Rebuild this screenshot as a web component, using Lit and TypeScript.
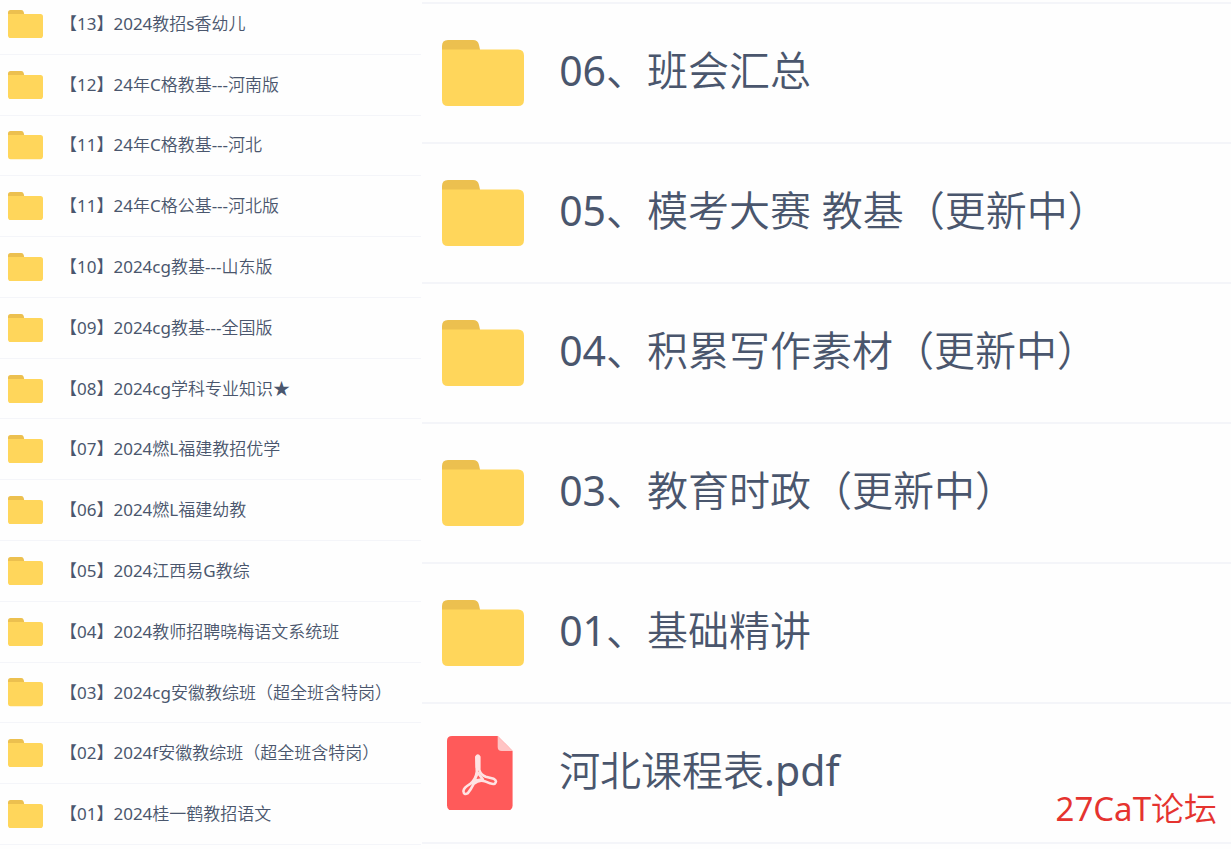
import { LitElement, css, html } from "lit";
import { customElement, property } from "lit/decorators.js";

interface Entry {
  name: string;
  kind: "folder" | "pdf";
}

const folder = (name: string): Entry => ({ name, kind: "folder" });

const COURSES: Entry[] = [
  "【13】2024教招s香幼儿",
  "【12】24年C格教基---河南版",
  "【11】24年C格教基---河北",
  "【11】24年C格公基---河北版",
  "【10】2024cg教基---山东版",
  "【09】2024cg教基---全国版",
  "【08】2024cg学科专业知识★",
  "【07】2024燃L福建教招优学",
  "【06】2024燃L福建幼教",
  "【05】2024江西易G教综",
  "【04】2024教师招聘晓梅语文系统班",
  "【03】2024cg安徽教综班（超全班含特岗）",
  "【02】2024f安徽教综班（超全班含特岗）",
  "【01】2024桂一鹤教招语文",
].map(folder);

const CONTENTS: Entry[] = [
  folder("06、班会汇总"),
  folder("05、模考大赛 教基（更新中）"),
  folder("04、积累写作素材（更新中）"),
  folder("03、教育时政（更新中）"),
  folder("01、基础精讲"),
  { name: "河北课程表.pdf", kind: "pdf" },
];

@customElement("file-icon")
class FileIcon extends LitElement {
  @property() kind: Entry["kind"] = "folder";

  static styles = css`
    :host {
      display: flex;
      justify-content: center;
    }
    .folder {
      display: block;
      width: 100%;
    }
    .pdf {
      display: block;
      width: 80%;
      margin-right: 8%;
    }
  `;

  render() {
    return this.kind === "folder"
      ? html`<svg class="folder" viewBox="0 0 82 66" aria-hidden="true">
          <path d="M0 14V6Q0 0 6 0H31Q36 0 37 5L39 14Z" fill="#ecc04f" />
          <path d="M0 9.5H76Q82 9.5 82 15.5V60Q82 66 76 66H6Q0 66 0 60Z" fill="#ffd65b" />
        </svg>`
      : html`<svg class="pdf" viewBox="0 0 66 75" aria-hidden="true">
          <path d="M5 0H51L66 15V70Q66 75 61 75H5Q0 75 0 70V5Q0 0 5 0Z" fill="#ff5a5a" />
          <path d="M51 0L66 15H55Q51 15 51 11Z" fill="#ffc4c4" />
          <g fill="none" stroke="#ffe3e3" stroke-width="2.600" stroke-linejoin="round">
            <path
              d="M29.500 21Q31 18.500 32.500 21V34Q34 39 39 41L47 43Q51 45.500 48 48Q45 49 39 46Q33 43 27 48Q24 54 21 57.500Q17 60 16.500 55.500Q17 52 23 48.500Q29 44 30 36Z"
            />
            <path d="M31 37L27.500 45L36 43.500Z" />
            <path d="M31 21V32" stroke-width="4.500" />
          </g>
        </svg>`;
  }
}

@customElement("file-list")
class FileList extends LitElement {
  @property({ attribute: false }) entries: Entry[] = [];
  @property() label = "";

  static styles = css`
    :host {
      display: grid;
      --line: 1px;
    }
    .list {
      display: grid;
      grid-auto-rows: 1fr;
      margin: 0;
      padding: 0;
      list-style: none;
    }
    .row {
      display: grid;
      grid-template-columns: var(--icon) minmax(0, 1fr);
      column-gap: var(--gap);
      align-items: center;
      padding-left: var(--inset);
      border-bottom: var(--line) solid #f4f5f9;
    }
    .name {
      padding-bottom: var(--lift);
      color: #4a566d;
      text-decoration: none;
      white-space: nowrap;
    }
  `;

  render() {
    return html`<ul class="list" aria-label=${this.label}>
      ${this.entries.map(
        (entry) => html`<li class="row">
          <file-icon .kind=${entry.kind}></file-icon>
          <a class="name" href="#">${entry.name}</a>
        </li>`,
      )}
    </ul>`;
  }
}

@customElement("app-root")
class AppRoot extends LitElement {
  static styles = css`
    :host {
      display: block;
      position: relative;
      overflow: hidden;
      background: #fefefe;
      font-family: "Noto Sans", "Noto Sans CJK SC DemiLight", "Noto Sans CJK SC", sans-serif;
    }
    .page {
      display: grid;
      grid-template-columns: minmax(0, 13fr) minmax(0, 25fr);
      align-items: start;
      min-height: 100vh;
    }
    .courses {
      --icon: 35px;
      --gap: 17px;
      --inset: 8px;
      --lift: 0px;
      min-height: calc(100vh + 2px);
      margin-top: -6px;
      font-size: 17px;
      line-height: 24px;
    }
    .contents {
      --icon: 82px;
      --gap: 35px;
      --inset: 20px;
      --lift: 6px;
      --line: 2px;
      min-height: calc(100vh - 9px);
      border-top: 2px solid #f4f5f9;
      margin: 2px 0 0 1px;
      font-size: 41px;
      line-height: 56px;
    }
    .watermark {
      position: absolute;
      right: 14px;
      bottom: 20px;
      color: #e5332f;
      font-size: 33px;
      line-height: 40px;
    }
  `;

  render() {
    return html`<main class="page">
        <file-list class="courses" label="课程" .entries=${COURSES}></file-list>
        <file-list class="contents" label="目录" .entries=${CONTENTS}></file-list>
      </main>
      <div class="watermark">27CaT论坛</div>`;
  }
}
